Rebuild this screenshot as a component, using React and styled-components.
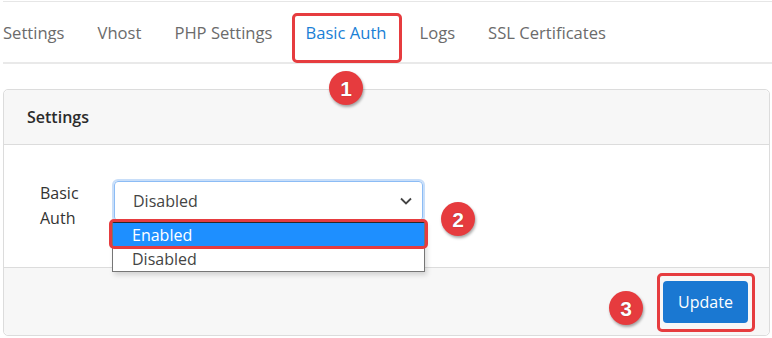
import React from "react";
import styled, { createGlobalStyle } from "styled-components";

const Global = createGlobalStyle`
  html, body { margin: 0; padding: 0; background: #fff; }
  body { font-family: "Open Sans", "Noto Sans", sans-serif; color: #333; }
`;

const Page = styled.div`
  width: 772px;
  height: 338px;
  overflow: hidden;
  padding-left: 3px;
  box-sizing: border-box;
`;

const TopRule = styled.div`
  margin-top: 1px;
  border-top: 1px solid #e6e6e6;
`;

const Nav = styled.nav`
  display: flex;
  height: 60px;
  align-items: center;
  border-bottom: 2px solid #e9e9e9;
`;

const Tab = styled.div`
  position: relative;
  padding: 0 16.5px;
  font-size: 16.6px;
  line-height: 24px;
  color: ${(p) => (p.$active ? "#1a7fd6" : "#6b6b6b")};
  margin-top: 2px;
  &:first-child { padding-left: 0; }
`;

const TabLabel = styled.span`
  position: relative;
  display: inline-block;
`;

const HighlightBox = styled.span`
  position: absolute;
  top: ${(p) => p.$t}px;
  right: ${(p) => p.$r}px;
  bottom: ${(p) => p.$b}px;
  left: ${(p) => p.$l}px;
  border: 3px solid #e63c3f;
  border-radius: 5px;
  pointer-events: none;
  z-index: 5;
`;

const Badge = styled.span`
  position: absolute;
  width: 34px;
  height: 34px;
  border-radius: 50%;
  background: #e63b3e;
  box-shadow: 1px 2px 3px rgba(0, 0, 0, 0.35);
  color: #fff;
  font-family: "Liberation Sans", Arial, sans-serif;
  font-weight: 700;
  font-size: 21px;
  line-height: 1;
  display: flex;
  align-items: center;
  justify-content: center;
  text-shadow: 0 0 1px #7a1a1a;
  z-index: 6;
`;

const TabBadge = styled(Badge)`
  left: 50%;
  top: 50px;
  transform: translateX(-50%);
`;

const SelectBadge = styled(Badge)`
  left: calc(100% + 18px);
  top: 21px;
`;

const ButtonBadge = styled(Badge)`
  right: calc(100% + 20px);
  top: 10px;
`;

const Card = styled.section`
  margin-top: 25px;
  width: 767px;
  border: 1px solid #dcdcdc;
  border-radius: 5px;
  box-sizing: border-box;
`;

const CardHeader = styled.header`
  height: 54px;
  background: #f7f7f7;
  border-bottom: 1px solid #dcdcdc;
  border-radius: 5px 5px 0 0;
  display: flex;
  align-items: center;
  padding-left: 23px;
  font-size: 16px;
  font-weight: 600;
  color: #2b2b2b;
`;

const CardBody = styled.div`
  height: 122px;
  box-sizing: border-box;
  padding: 36px 24px 0;
  background: #fff;
`;

const FormRow = styled.div`
  display: flex;
  align-items: flex-start;
`;

const Label = styled.label`
  width: 74px;
  padding-left: 12px;
  font-size: 16px;
  line-height: 25px;
  color: #333;
`;

const SelectWrap = styled.div`
  position: relative;
  width: 309px;
`;

const SelectBox = styled.div`
  height: 40px;
  box-sizing: border-box;
  border: 1px solid #8cbcf5;
  border-radius: 4px;
  box-shadow: 0 0 0 2px #c8def9;
  display: flex;
  align-items: center;
  justify-content: space-between;
  padding: 0 10px 0 18px;
  font-size: 16px;
  color: #444;
`;

const Chevron = styled.svg`
  width: 12px;
  height: 8px;
`;

const OptionList = styled.ul`
  position: absolute;
  top: 41px;
  left: -2px;
  width: 313px;
  box-sizing: border-box;
  margin: 0;
  padding: 0;
  list-style: none;
  border: 1px solid #767676;
  border-top-color: #2a2a2a;
  background: #fff;
  box-shadow: 2px 3px 5px rgba(0, 0, 0, 0.15);
  z-index: 4;
`;

const Option = styled.li`
  position: relative;
  height: 24px;
  line-height: 24px;
  padding-left: 19px;
  font-size: 16px;
  background: ${(p) => (p.$selected ? "#1e8fff" : "#fff")};
  color: ${(p) => (p.$selected ? "#fff" : "#444")};
`;

const CardFooter = styled.footer`
  height: 68px;
  box-sizing: border-box;
  background: #f7f7f7;
  border-top: 1px solid #dcdcdc;
  border-radius: 0 0 5px 5px;
  display: flex;
  justify-content: flex-end;
  align-items: flex-start;
  padding: 13px 21px 0 0;
`;

const Button = styled.button`
  position: relative;
  width: 85px;
  height: 42px;
  border: none;
  border-radius: 4px;
  background: #1a78d2;
  color: #fff;
  font-family: "Open Sans", "Noto Sans", sans-serif;
  font-size: 16px;
  cursor: pointer;
`;

export default function App() {
  const tabs = ["Settings", "Vhost", "PHP Settings", "Basic Auth", "Logs", "SSL Certificates"];
  return (
    <>
      <Global />
      <Page>
        <TopRule />
        <Nav>
          {tabs.map((t) => {
            const active = t === "Basic Auth";
            return (
              <Tab key={t} $active={active}>
                <TabLabel>
                  {t}
                  {active && <HighlightBox $t={-8} $r={-15} $b={-18} $l={-13} />}
                  {active && <TabBadge>1</TabBadge>}
                </TabLabel>
              </Tab>
            );
          })}
        </Nav>
        <Card>
          <CardHeader>Settings</CardHeader>
          <CardBody>
            <FormRow>
              <Label>
                Basic
                <br />
                Auth
              </Label>
              <SelectWrap>
                <SelectBox>
                  <span>Disabled</span>
                  <Chevron viewBox="0 0 12 8">
                    <polyline points="1,1.5 6,6.5 11,1.5" fill="none" stroke="#444" strokeWidth="1.8" />
                  </Chevron>
                </SelectBox>
                <OptionList>
                  <Option $selected>
                    Enabled
                    <HighlightBox $t={-4} $r={-4} $b={-2} $l={-4} />
                  </Option>
                  <Option>Disabled</Option>
                </OptionList>
                <SelectBadge>2</SelectBadge>
              </SelectWrap>
            </FormRow>
          </CardBody>
          <CardFooter>
            <Button>
              Update
              <HighlightBox $t={-8} $r={-7} $b={-9} $l={-6} />
              <ButtonBadge>3</ButtonBadge>
            </Button>
          </CardFooter>
        </Card>
      </Page>
    </>
  );
}
